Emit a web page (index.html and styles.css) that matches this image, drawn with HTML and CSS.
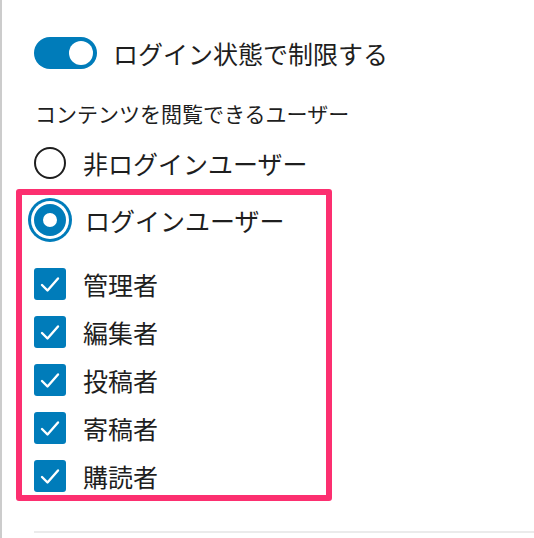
FILE: index.html
```html
<!DOCTYPE html>
<html lang="ja">
<head>
<meta charset="utf-8">
<link rel="stylesheet" href="styles.css">
</head>
<body>
<div class="panel">
  <div class="toggle-row">
    <span class="toggle"><span class="knob"></span></span>
    <span class="label">ログイン状態で制限する</span>
  </div>
  <div class="subtitle">コンテンツを閲覧できるユーザー</div>
  <div class="row radio-row">
    <span class="radio"></span>
    <span class="label">非ログインユーザー</span>
  </div>
  <div class="highlight">
    <div class="row radio-row">
      <span class="radio checked"></span>
      <span class="label">ログインユーザー</span>
    </div>
    <div class="checks">
      <div class="row"><span class="checkbox"><svg viewBox="0 0 32 32" width="32" height="32"><path d="M8 17 L13.5 22.5 L24 10.5" fill="none" stroke="#fff" stroke-width="2.4" stroke-linecap="round" stroke-linejoin="round"/></svg></span><span class="label">管理者</span></div>
      <div class="row"><span class="checkbox"><svg viewBox="0 0 32 32" width="32" height="32"><path d="M8 17 L13.5 22.5 L24 10.5" fill="none" stroke="#fff" stroke-width="2.4" stroke-linecap="round" stroke-linejoin="round"/></svg></span><span class="label">編集者</span></div>
      <div class="row"><span class="checkbox"><svg viewBox="0 0 32 32" width="32" height="32"><path d="M8 17 L13.5 22.5 L24 10.5" fill="none" stroke="#fff" stroke-width="2.4" stroke-linecap="round" stroke-linejoin="round"/></svg></span><span class="label">投稿者</span></div>
      <div class="row"><span class="checkbox"><svg viewBox="0 0 32 32" width="32" height="32"><path d="M8 17 L13.5 22.5 L24 10.5" fill="none" stroke="#fff" stroke-width="2.4" stroke-linecap="round" stroke-linejoin="round"/></svg></span><span class="label">寄稿者</span></div>
      <div class="row"><span class="checkbox"><svg viewBox="0 0 32 32" width="32" height="32"><path d="M8 17 L13.5 22.5 L24 10.5" fill="none" stroke="#fff" stroke-width="2.4" stroke-linecap="round" stroke-linejoin="round"/></svg></span><span class="label">購読者</span></div>
    </div>
  </div>
  <div class="divider"></div>
</div>
</body>
</html>
```
FILE: styles.css
```css
html, body {
  margin: 0;
  padding: 0;
  background: #fff;
}
body {
  font-family: "Noto Sans CJK JP", "Noto Sans", sans-serif;
  color: #1e1e1e;
  overflow: hidden;
}
.panel {
  border-left: 2px solid #cccccc;
  min-height: 538px;
  box-sizing: border-box;
  padding-left: 32px;
  padding-top: 37px;
}
.toggle-row {
  display: flex;
  align-items: center;
  height: 32px;
  gap: 16px;
}
.toggle {
  width: 63px;
  height: 32px;
  border-radius: 16px;
  background: #007cba;
  display: flex;
  align-items: center;
  justify-content: flex-end;
  padding-right: 4px;
  box-sizing: border-box;
  flex: none;
}
.knob {
  width: 24px;
  height: 24px;
  border-radius: 50%;
  background: #fff;
}
.label {
  font-size: 25px;
  line-height: 32px;
  white-space: nowrap;
}
.subtitle {
  margin-top: 29px;
  font-size: 21px;
  line-height: 30px;
  padding-left: 1px;
}
.row {
  display: flex;
  align-items: center;
  height: 32px;
  gap: 17px;
}
.subtitle + .row {
  margin-top: 19px;
}
.radio {
  width: 32px;
  height: 32px;
  box-sizing: border-box;
  border-radius: 50%;
  border: 2px solid #1e1e1e;
  flex: none;
}
.radio.checked {
  border: 9px solid #007cba;
  background: #fff;
  box-shadow: 0 0 0 3px #fff, 0 0 0 6px #007cba;
}
.highlight {
  margin-top: 10px;
  margin-left: -18px;
  width: 316px;
  box-sizing: border-box;
  border: 6px solid #fc2f70;
  border-radius: 3px;
  padding: 9px 0 3px 12px;
}
.highlight .radio-row {
  gap: 19px;
}
.checks {
  margin-top: 32px;
  display: flex;
  flex-direction: column;
  gap: 16px;
}
.checkbox {
  width: 32px;
  height: 32px;
  border-radius: 3px;
  background: #007cba;
  flex: none;
  display: block;
}
.checkbox svg {
  display: block;
}
.divider {
  margin-top: 30px;
  height: 2px;
  background: #ebebeb;
}
```
